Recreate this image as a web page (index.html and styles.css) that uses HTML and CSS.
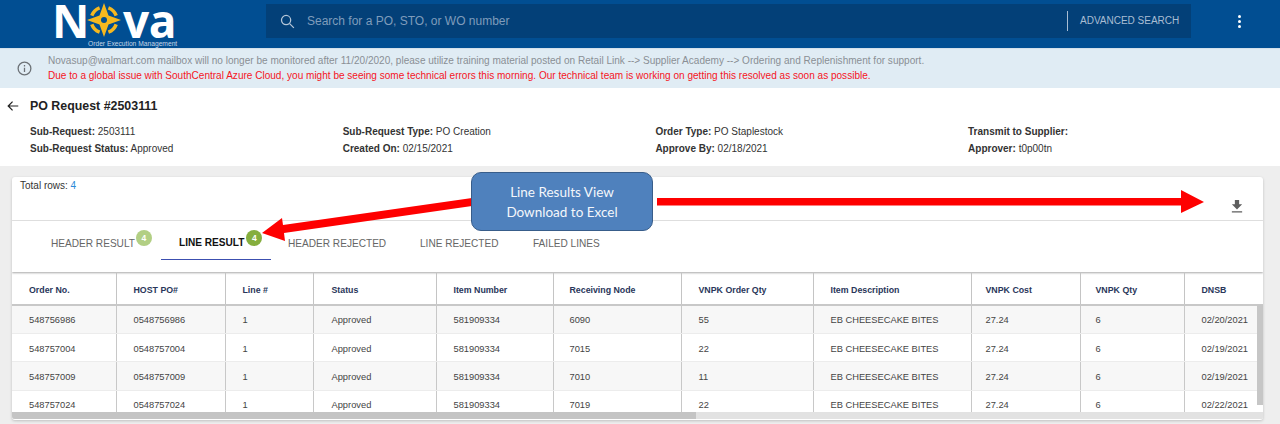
FILE: index.html
```html
<!DOCTYPE html>
<html lang="en">
<head>
<meta charset="utf-8">
<title>PO Request #2503111</title>
<link rel="stylesheet" href="styles.css">
</head>
<body>
<header class="topbar">
  <div class="logo">
    <div class="logo-word"><span class="logo-n">N</span><svg class="compass" viewBox="0 0 34 34" aria-hidden="true">
      <path class="c-ring" d="M21.400 4.800A13 13 0 0 1 29.200 12.600M4.800 12.600A13 13 0 0 1 12.600 4.800M29.200 21.400A13 13 0 0 1 21.400 29.200M12.600 29.200A13 13 0 0 1 4.800 21.400"/>
      <path class="c-star" d="M17 0L21.500 12.500L34 17L21.500 21.500L17 34L12.500 21.500L0 17L12.500 12.500Z"/>
      <circle class="c-hub" cx="17" cy="17" r="3"/>
    </svg><span class="logo-va">va</span></div>
    <div class="logo-sub">Order Execution Management</div>
  </div>
  <div class="search">
    <svg class="search-icon" viewBox="0 0 24 24" aria-hidden="true"><circle cx="10" cy="10" r="6.500"/><path d="M15 15l6 6"/></svg>
    <span class="search-text">Search for a PO, STO, or WO number</span>
    <span class="adv">ADVANCED SEARCH</span>
  </div>
  <div class="kebab" aria-hidden="true"><i></i><i></i><i></i></div>
</header>

<section class="notice">
  <svg class="info" viewBox="0 0 24 24" aria-hidden="true"><circle cx="12" cy="12" r="9"/><path d="M12 11v6M12 7v2"/></svg>
  <div>
    <p class="notice-grey">Novasup@walmart.com mailbox will no longer be monitored after 11/20/2020, please utilize training material posted on Retail Link --&gt; Supplier Academy --&gt; Ordering and Replenishment for support.</p>
    <p class="notice-red">Due to a global issue with SouthCentral Azure Cloud, you might be seeing some technical errors this morning. Our technical team is working on getting this resolved as soon as possible.</p>
  </div>
</section>

<section class="details">
  <div class="title-row">
    <svg class="back" viewBox="0 0 16 16" aria-hidden="true"><path d="M14 8H2.500M7.500 3L2.500 8l5 5"/></svg>
    <h1>PO Request #2503111</h1>
  </div>
  <div class="meta">
    <div><b>Sub-Request:</b> 2503111</div>
    <div><b>Sub-Request Type:</b> PO Creation</div>
    <div><b>Order Type:</b> PO Staplestock</div>
    <div><b>Transmit to Supplier:</b></div>
    <div><b>Sub-Request Status:</b> Approved</div>
    <div><b>Created On:</b> 02/15/2021</div>
    <div><b>Approve By:</b> 02/18/2021</div>
    <div><b>Approver:</b> t0p00tn</div>
  </div>
</section>

<main class="content">
  <div class="card">
    <div class="card-top">
      <div class="total">Total rows: <span>4</span></div>
      <svg class="download" viewBox="0 0 14 16" aria-hidden="true"><path d="M4.500 1h5v5H13L7 12 1 6h3.500zM1 14h12v1.600H1z"/></svg>
    </div>
    <nav class="tabs">
      <div class="tab tab-header">HEADER RESULT<span class="badge badge-light">4</span></div>
      <div class="tab tab-line">LINE RESULT<span class="badge">4</span></div>
      <div class="tab tab-hrej">HEADER REJECTED</div>
      <div class="tab tab-lrej">LINE REJECTED</div>
      <div class="tab tab-fail">FAILED LINES</div>
    </nav>
    <div class="table-wrap">
      <table>
        <colgroup>
          <col class="c1"><col class="c2"><col class="c3"><col class="c4"><col class="c5"><col class="c6"><col class="c7"><col class="c8"><col class="c9"><col class="c10"><col class="c11">
        </colgroup>
        <thead>
          <tr><th>Order No.</th><th>HOST PO#</th><th>Line #</th><th>Status</th><th>Item Number</th><th>Receiving Node</th><th>VNPK Order Qty</th><th>Item Description</th><th>VNPK Cost</th><th>VNPK Qty</th><th>DNSB</th></tr>
        </thead>
        <tbody>
          <tr><td>548756986</td><td>0548756986</td><td>1</td><td>Approved</td><td>581909334</td><td>6090</td><td>55</td><td>EB CHEESECAKE BITES</td><td>27.24</td><td>6</td><td>02/20/2021</td></tr>
          <tr><td>548757004</td><td>0548757004</td><td>1</td><td>Approved</td><td>581909334</td><td>7015</td><td>22</td><td>EB CHEESECAKE BITES</td><td>27.24</td><td>6</td><td>02/19/2021</td></tr>
          <tr><td>548757009</td><td>0548757009</td><td>1</td><td>Approved</td><td>581909334</td><td>7010</td><td>11</td><td>EB CHEESECAKE BITES</td><td>27.24</td><td>6</td><td>02/19/2021</td></tr>
          <tr><td>548757024</td><td>0548757024</td><td>1</td><td>Approved</td><td>581909334</td><td>7019</td><td>22</td><td>EB CHEESECAKE BITES</td><td>27.24</td><td>6</td><td>02/22/2021</td></tr>
        </tbody>
      </table>
      <div class="vscroll"></div>
    </div>
    <div class="hscroll"><div class="hthumb"></div></div>
  </div>
</main>

<svg class="arrows" viewBox="0 0 1280 424" aria-hidden="true">
  <path d="M657 198H1181V190L1204 202L1181 213V205.500H657Z"/>
  <path d="M472 198L283 225L282 218L262 233L285 241L284 233L472 206Z"/>
</svg>
<div class="callout"><div>Line Results View</div><div>Download to Excel</div></div>
</body>
</html>
```
FILE: styles.css
```css
* { box-sizing: border-box; }
html, body { margin: 0; height: 424px; overflow: hidden; }
body { font-family: "Liberation Sans", Arial, sans-serif; background: #eeeeee; color: #333; position: relative; }
p, h1 { margin: 0; }

.topbar { height: 48px; background: #014e92; display: flex; align-items: flex-start; position: relative; }
.logo { width: 266px; padding-left: 52px; flex: none; }
.logo-word { display: flex; align-items: center; height: 39px; color: #fff; font-family: "Open Sans", sans-serif; font-weight: 700; line-height: 38px; }
.logo-n { font-size: 46px; width: 35px; }
.logo-va { font-size: 46px; letter-spacing: -0.5px; }
.compass { width: 34px; height: 34px; margin: 1px 2px 0 0; flex: none; }
.c-ring { fill: none; stroke: #f6b81f; stroke-width: 3.500; }
.c-star { fill: #f6b81f; }
.c-hub { fill: #014e92; }
.logo-sub { color: #c5d6e6; font-size: 6.700px; line-height: 8px; padding: 1px 0 0 36px; white-space: nowrap; }

.search { width: 925px; height: 34px; margin-top: 4px; background: #034078; display: flex; align-items: center; padding-left: 13px; flex: none; }
.search-icon { width: 17px; height: 17px; fill: none; stroke: #b5c6d8; stroke-width: 1.800; flex: none; }
.search-text { color: #7f9cbb; font-size: 12px; margin-left: 11px; flex: 1; }
.adv { color: #a9bdd3; font-size: 10px; border-left: 1px solid #a9bdd3; height: 20px; line-height: 20px; padding-left: 12px; width: 124px; flex: none; }
.kebab { margin: 15px 0 0 47px; display: flex; flex-direction: column; gap: 2px; }
.kebab i { display: block; width: 3px; height: 3px; border-radius: 50%; background: #fff; }

.notice { height: 40px; background: #e0ecf4; display: flex; align-items: center; padding-left: 16px; gap: 15px; border-top: 1px solid #d3e0ea; }
.info { width: 17px; height: 17px; fill: none; stroke: #6c7176; stroke-width: 1.800; flex: none; }
.notice p { font-size: 10.050px; line-height: 14.500px; white-space: nowrap; }
.notice-grey { color: #8a8f94; }
.notice-red { color: #f5141e; }

.details { height: 78px; background: #fff; padding: 9px 0 0 6px; }
.title-row { display: flex; align-items: center; gap: 10px; height: 18px; }
.back { width: 14px; height: 14px; fill: none; stroke: #222; stroke-width: 1.400; flex: none; }
h1 { font-size: 12.400px; font-weight: 700; color: #222; line-height: 18px; }
.meta { display: grid; grid-template-columns: 312.700px 312.700px 312.700px 1fr; margin: 8px 0 0 24px; font-size: 10px; line-height: 17px; color: #333; }
.meta b { color: #333; }

.content { height: 258px; padding: 11px 17px 0 12px; }
.card { height: 243px; background: #fff; border-radius: 3px; box-shadow: 0 1px 3px rgba(0,0,0,.2); overflow: hidden; width: 1251px; }
.card-top { height: 44px; border-bottom: 1px solid #e4e4e4; display: flex; justify-content: space-between; padding: 2px 20px 0 8px; }
.total { font-size: 10px; line-height: 13px; color: #333; }
.total span { color: #2b8ad6; }
.download { width: 12px; height: 14px; fill: #5e5e5e; margin-top: 20px; }

.tabs { height: 51px; display: flex; align-items: flex-start; position: relative; box-shadow: 0 1px 2px rgba(0,0,0,.35); }
.tab { font-size: 10.100px; color: #666; line-height: 12px; padding-top: 17px; height: 39px; position: relative; white-space: nowrap; }
.tab-header { margin-left: 39px; width: 123px; }
.tab-line { padding-left: 18px; margin-left: -13px; font-weight: 700; color: #111; border-bottom: 1.500px solid #3c4fb0; padding-top: 16px; width: 110px; }
.tab-hrej { margin-left: 17px; width: 132px; }
.tab-lrej { width: 113px; }
.badge { position: absolute; top: 9px; width: 16px; height: 16px; border-radius: 50%; background: #85ae3e; color: #fff; font-size: 8.500px; font-weight: 700; text-align: center; line-height: 16px; margin-left: 2px; }
.badge-light { background: #b2cf84; margin-left: 1px; }

.table-wrap { position: relative; height: 140px; overflow: hidden; }
table { border-collapse: collapse; table-layout: fixed; width: 1251px; font-size: 9.300px; color: #444; }
.c1 { width: 104px; } .c2 { width: 109px; } .c3 { width: 88px; } .c4 { width: 123px; }
.c5 { width: 117px; } .c6 { width: 128px; } .c7 { width: 132px; } .c8 { width: 158px; }
.c9 { width: 109px; } .c10 { width: 104px; } .c11 { width: 79px; }
th { height: 33px; text-align: left; font-size: 8.800px; color: #29365a; font-weight: 700; padding: 3px 0 0 17px; border-right: 1px solid #c4c4c4; border-bottom: 2px solid #c8c8c8; white-space: nowrap; }
td { height: 28.400px; padding: 2px 0 0 17px; border-right: 1px solid #c8c8c8; border-bottom: 1px solid #ececec; white-space: nowrap; }
th:nth-child(4), td:nth-child(4) { padding-left: 18px; }
th:nth-child(6), td:nth-child(6) { padding-left: 16px; }
th:nth-child(9), td:nth-child(9) { padding-left: 14px; }
th:nth-child(10), td:nth-child(10) { padding-left: 15px; }
th:nth-child(11), td:nth-child(11) { padding-left: 17px; }
th:last-child, td:last-child { border-right: 0; }
tbody tr:nth-child(odd) td { background: #f7f7f7; }
tbody tr:nth-child(even) td { background: #fff; }

.vscroll { position: absolute; right: 0; top: 33px; width: 6px; height: 100px; background: #c6c6c6; }
.hscroll { height: 7px; background: #e2e2e2; }
.hthumb { width: 684px; height: 7px; background: #c4c4c4; border-radius: 0 0 0 3px; }

.arrows { position: absolute; left: 0; top: 0; width: 1280px; height: 424px; pointer-events: none; }
.arrows path { fill: #fe0000; }
.callout { position: absolute; left: 471px; top: 172px; width: 182px; height: 59px; background: #4f81bd; border: 1.500px solid #385d8a; border-radius: 10px; color: #f4f7fb; font-family: Lato, sans-serif; font-size: 13.500px; line-height: 20px; text-align: center; padding-top: 9px; }
```
